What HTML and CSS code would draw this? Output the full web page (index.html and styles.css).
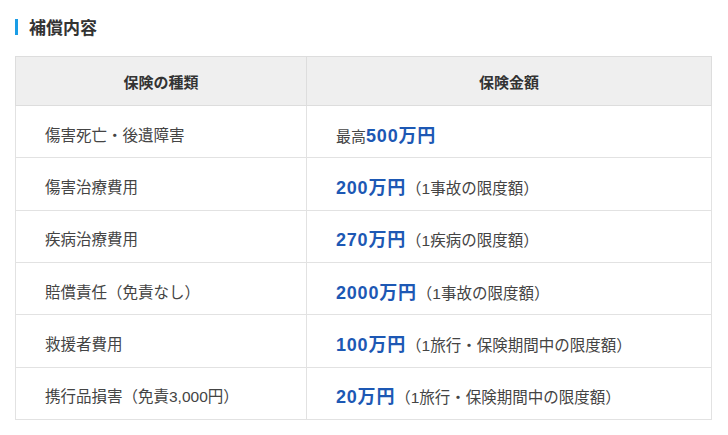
FILE: index.html
```
<!DOCTYPE html>
<html lang="ja">
<head>
<meta charset="utf-8">
<link rel="stylesheet" href="styles.css">
</head>
<body>
<section class="coverage">
  <h2 class="coverage-title">補償内容</h2>
  <table class="coverage-table">
    <thead>
      <tr>
        <th class="col-type">保険の種類</th>
        <th class="col-amount">保険金額</th>
      </tr>
    </thead>
    <tbody>
      <tr>
        <td class="type">傷害死亡・後遺障害</td>
        <td class="amount"><span class="prefix">最高</span><span class="value">500万円</span></td>
      </tr>
      <tr>
        <td class="type">傷害治療費用</td>
        <td class="amount"><span class="value">200万円</span><span class="note">（1事故の限度額）</span></td>
      </tr>
      <tr>
        <td class="type">疾病治療費用</td>
        <td class="amount"><span class="value">270万円</span><span class="note">（1疾病の限度額）</span></td>
      </tr>
      <tr>
        <td class="type">賠償責任（免責なし）</td>
        <td class="amount"><span class="value">2000万円</span><span class="note">（1事故の限度額）</span></td>
      </tr>
      <tr>
        <td class="type">救援者費用</td>
        <td class="amount"><span class="value">100万円</span><span class="note">（1旅行・保険期間中の限度額）</span></td>
      </tr>
      <tr>
        <td class="type">携行品損害（免責3,000円）</td>
        <td class="amount"><span class="value">20万円</span><span class="note">（1旅行・保険期間中の限度額）</span></td>
      </tr>
    </tbody>
  </table>
</section>
</body>
</html>
```

FILE: styles.css
```
html, body {
  margin: 0;
  padding: 0;
  background: #ffffff;
}

body {
  font-family: "Liberation Sans", "Noto Sans CJK JP", sans-serif;
  color: #444444;
}

.coverage {
  padding: 19px 16px 0 15px;
}

.coverage-title {
  margin: 0 0 21px 0;
  border-left: 3px solid #1a9de6;
  padding-left: 11px;
  font-size: 17px;
  font-weight: bold;
  line-height: 16px;
  color: #333333;
  font-family: "Noto Sans CJK JP", sans-serif;
}

.coverage-table {
  width: 697px;
  border-collapse: collapse;
  border: 1px solid #d9d9d9;
  table-layout: fixed;
}

.coverage-table th {
  background: #efefef;
  height: 48px;
  padding: 0;
  font-size: 15px;
  font-weight: bold;
  color: #333333;
  text-align: center;
  border: 1px solid #dddddd;
  font-family: "Noto Sans CJK JP", sans-serif;
}

.col-type {
  width: 290px;
}

.coverage-table td {
  height: 47.33px;
  padding: 4px 0 0 29px;
  border: 1px solid #e2e2e2;
  font-size: 15.5px;
  vertical-align: middle;
}

.type {
  color: #444444;
}

.prefix {
  font-size: 15px;
  color: #444444;
}

.value {
  font-size: 18px;
  font-weight: bold;
  color: #1d58b4;
  letter-spacing: 0.8px;
}

.note {
  font-size: 15.5px;
  color: #444444;
}
```
